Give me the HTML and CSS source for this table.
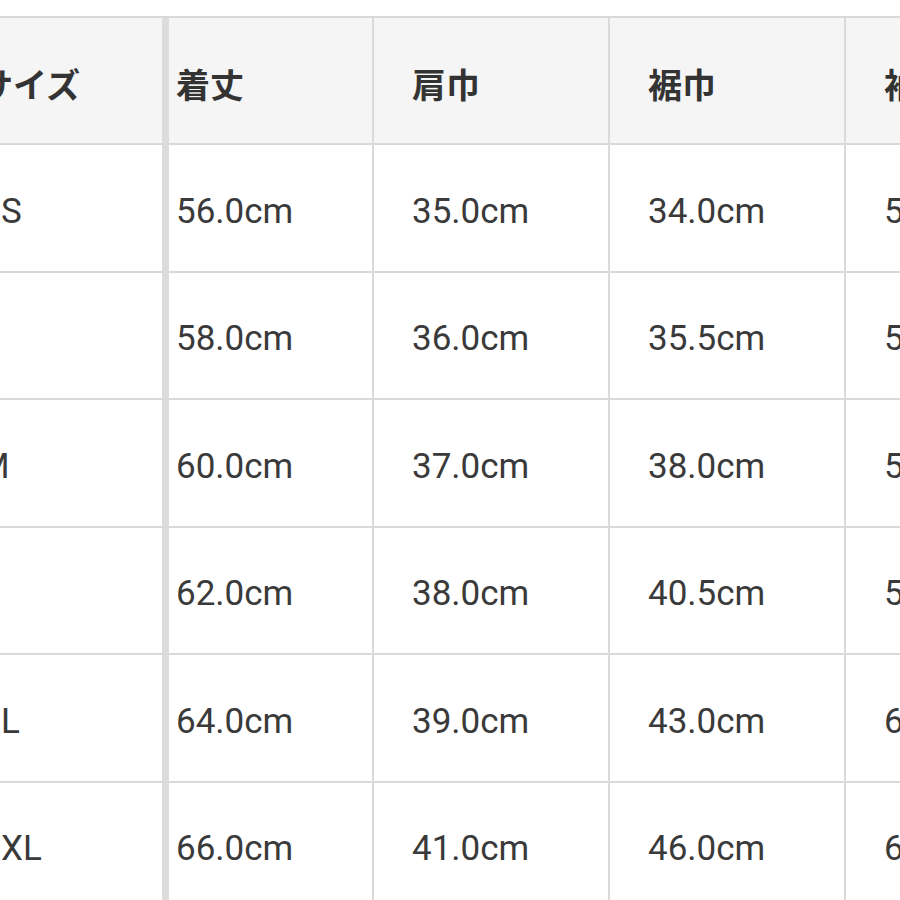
FILE: index.html
```html
<!DOCTYPE html>
<html lang="ja">
<head>
<meta charset="utf-8">
<title>サイズ表</title>
<link rel="stylesheet" href="styles.css">
</head>
<body>
<div class="frame">
  <div class="size-table">
    <div class="cell head first">サイズ</div>
    <div class="cell head c2">着丈</div>
    <div class="cell head">肩巾</div>
    <div class="cell head">裾巾</div>
    <div class="cell head">袖丈</div>

    <div class="cell first">XS</div>
    <div class="cell c2">56.0cm</div>
    <div class="cell">35.0cm</div>
    <div class="cell">34.0cm</div>
    <div class="cell">57.0cm</div>

    <div class="cell first">S</div>
    <div class="cell c2">58.0cm</div>
    <div class="cell">36.0cm</div>
    <div class="cell">35.5cm</div>
    <div class="cell">58.0cm</div>

    <div class="cell first">M</div>
    <div class="cell c2">60.0cm</div>
    <div class="cell">37.0cm</div>
    <div class="cell">38.0cm</div>
    <div class="cell">59.0cm</div>

    <div class="cell first">L</div>
    <div class="cell c2">62.0cm</div>
    <div class="cell">38.0cm</div>
    <div class="cell">40.5cm</div>
    <div class="cell">59.5cm</div>

    <div class="cell first">XL</div>
    <div class="cell c2">64.0cm</div>
    <div class="cell">39.0cm</div>
    <div class="cell">43.0cm</div>
    <div class="cell">60.0cm</div>

    <div class="cell first">XXL</div>
    <div class="cell c2">66.0cm</div>
    <div class="cell">41.0cm</div>
    <div class="cell">46.0cm</div>
    <div class="cell">61.0cm</div>
  </div>
</div>
</body>
</html>
```

FILE: styles.css
```css
html, body {
  margin: 0;
  padding: 0;
  background: #ffffff;
}

body {
  width: 900px;
  height: 900px;
  overflow: hidden;
  font-family: Roboto, "Noto Sans CJK JP", sans-serif;
  color: #3a3a3a;
}

.frame {
  padding-top: 16px;
  margin-left: -61px;
}

.size-table {
  display: grid;
  grid-template-columns: 230px 205px 236px 236px 236px;
  grid-template-rows: 127px;
  grid-auto-rows: 127.5px;
  border-top: 2px solid #d9d9d9;
  width: max-content;
}

.cell {
  display: flex;
  align-items: center;
  padding: 7px 0 0 38px;
  box-sizing: border-box;
  border-right: 2px solid #dadada;
  border-bottom: 2px solid #d9d9d9;
  background: #ffffff;
  font-size: 35px;
  white-space: nowrap;
}

.cell.head {
  background: #f5f5f5;
  font-family: "Noto Sans CJK JP", sans-serif;
  font-weight: 700;
  font-size: 34px;
  padding-top: 5px;
  color: #333333;
}

.cell.first {
  padding-left: 40px;
  border-right: 7px solid #dcdcdc;
}

.cell.c2 {
  padding-left: 7px;
}
```
